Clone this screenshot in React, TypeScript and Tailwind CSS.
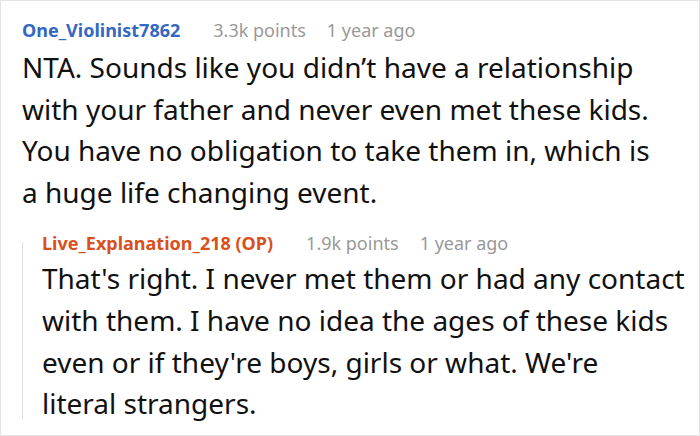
import React from "react";

const font = { fontFamily: '"Noto Sans", "Open Sans", sans-serif' };

function Meta({ name, nameClass, points }: { name: string; nameClass: string; points: string }) {
  return (
    <div className="flex items-baseline text-[18px] leading-[26px] whitespace-nowrap">
      <span className={`font-bold ${nameClass}`}>{name}</span>
      <span className="ml-[33px] text-[#999999]">{points}</span>
      <span className="ml-[21px] text-[#999999]">1 year ago</span>
    </div>
  );
}

function Lines({ lines }: { lines: string[] }) {
  return (
    <p className="text-[28px] leading-[41.6px] whitespace-nowrap">
      {lines.map((l, i) => (
        <span key={i} className="block">
          {l}
        </span>
      ))}
    </p>
  );
}

export default function App() {
  return (
    <div style={font} className="w-[700px] h-[436px] bg-white border border-[#e3e3e3] pl-[21px] pt-[16px] text-[#111111] overflow-hidden">
      <Meta name="One_Violinist7862" nameClass="text-[#3568c0]" points="3.3k points" />
      <div className="mt-[4px]">
        <Lines
          lines={[
            "NTA. Sounds like you didn’t have a relationship",
            "with your father and never even met these kids.",
            "You have no obligation to take them in, which is",
            "a huge life changing event.",
          ]}
        />
      </div>
      <div className="mt-[17px] flex">
        <div className="w-px bg-[#e0e0e0] mt-[12px] mb-[6px] shrink-0" />
        <div className="ml-[19px]">
          <Meta name="Live_Explanation_218 (OP)" nameClass="text-[#d8501c]" points="1.9k points" />
          <div className="mt-[2px]">
            <Lines
              lines={[
                "That's right. I never met them or had any contact",
                "with them. I have no idea the ages of these kids",
                "even or if they're boys, girls or what. We're",
                "literal strangers.",
              ]}
            />
          </div>
        </div>
      </div>
    </div>
  );
}
